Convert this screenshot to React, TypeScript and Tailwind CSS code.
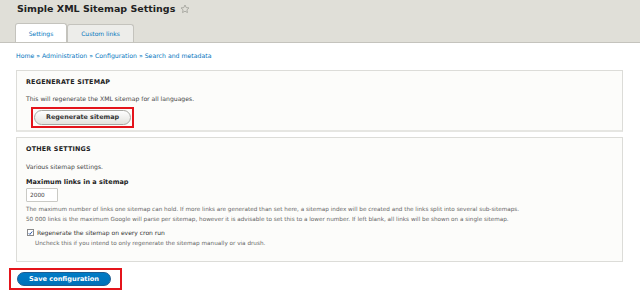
import React from "react";

// Simple XML Sitemap settings page (Drupal Seven admin look)
export default function App() {
  const font = { fontFamily: '"DejaVu Sans", Verdana, sans-serif' };

  return (
    <div className="w-[640px] h-[294px] bg-white overflow-hidden text-[#333]" style={font}>
      {/* Header with title and tabs */}
      <div className="h-[43px] bg-[#e0dfd8] border-b border-[#c4c3bd] px-[15px] flex flex-col justify-between">
        <div className="flex items-center gap-[5px] pl-[2px] pt-[1px] h-[16px]">
          <h1 className="text-[9.5px] font-bold text-[#222] leading-none">Simple XML Sitemap Settings</h1>
          <svg width="10" height="10" viewBox="0 0 24 24" fill="none" stroke="#9a9a94" strokeWidth="1.8" strokeLinejoin="round">
            <path d="M12 2.5l2.9 6.1 6.6.8-4.9 4.6 1.3 6.6L12 17.3l-5.9 3.3 1.3-6.6-4.9-4.6 6.6-.8z" />
          </svg>
        </div>
        <div className="flex items-end">
          <div className="w-[52px] h-[19px] bg-white rounded-t-[3px] border border-b-0 border-[#c4c3bd] flex items-center justify-center text-[6px] text-[#0074bd]">
            Settings
          </div>
          <div className="w-[67px] h-[18px] bg-[#ededea] rounded-t-[3px] border border-b-0 border-[#c4c3bd] flex items-center justify-center text-[6px] text-[#0074bd]">
            Custom links
          </div>
        </div>
      </div>

      <div className="px-[16px] pr-[17px]">
        {/* Breadcrumb */}
        <div className="h-[27px] flex items-center text-[6.2px] text-[#0074bd] pb-[1px]">
          Home » Administration » Configuration » Search and metadata
        </div>

        {/* Regenerate fieldset */}
        <div className="h-[62px] bg-[#fcfcfa] border border-[#dcdcd8] border-b-2 border-b-[#e6e6e2] px-[9px]">
          <div className="mt-[8px] text-[6.4px] font-bold tracking-[0.2px] text-[#222] leading-[7px]">REGENERATE SITEMAP</div>
          <div className="mt-[9px] text-[6.1px] text-[#444] leading-[7px]">This will regenerate the XML sitemap for all languages.</div>
          <div className="mt-[2px] ml-[5px] inline-flex border-2 border-[#e4141b] p-[1px]">
            <button className="w-[97px] h-[15px] rounded-full border border-[#a8a8a3] bg-gradient-to-b from-[#fefefe] to-[#e3e3de] text-[6.4px] font-bold text-[#333] leading-none">
              Regenerate sitemap
            </button>
          </div>
        </div>

        {/* Other settings fieldset */}
        <div className="mt-[5px] h-[125px] bg-[#fcfcfa] border border-[#dcdcd8] px-[9px]">
          <div className="mt-[8px] text-[6.4px] font-bold tracking-[0.2px] text-[#222] leading-[7px]">OTHER SETTINGS</div>
          <div className="mt-[10px] text-[6.1px] text-[#444] leading-[7px]">Various sitemap settings.</div>
          <div className="mt-[9px] text-[6.5px] font-bold text-[#222] leading-[7px]">Maximum links in a sitemap</div>
          <div className="mt-[2px] w-[32px] h-[14px] bg-white border border-[#cacac5] rounded-[1px] flex items-center pl-[3px] text-[5.8px] text-[#444]">
            2000
          </div>
          <div className="mt-[2px] text-[5.7px] text-[#666] leading-[10px] whitespace-nowrap">
            <div>
              The maximum number of links one sitemap can hold. If more links are generated than set here, a sitemap index will be created and the links split into several sub-sitemaps.
            </div>
            <div>
              50 000 links is the maximum Google will parse per sitemap, however it is advisable to set this to a lower number. If left blank, all links will be shown on a single sitemap.
            </div>
          </div>
          <div className="mt-[5px] flex items-center gap-[3px] ml-[1px] text-[6px] text-[#333] leading-[7px]">
            <span className="w-[7px] h-[7px] border border-[#8a8a8a] bg-white flex items-center justify-center">
              <svg width="6" height="6" viewBox="0 0 10 10" fill="none" stroke="#2a55a0" strokeWidth="2">
                <path d="M1.5 5.5l2.3 2.3L8.5 2" />
              </svg>
            </span>
            Regenerate the sitemap on every cron run
          </div>
          <div className="mt-[4px] ml-[9px] text-[5.7px] text-[#666] leading-[7px]">
            Uncheck this if you intend to only regenerate the sitemap manually or via drush.
          </div>
        </div>
      </div>

      {/* Save button */}
      <div className="pl-[9px] mt-[2px]">
        <div className="inline-flex w-[113px] h-[22px] border-2 border-[#e4141b] pl-[6px] pt-[2px]">
          <button className="w-[94px] h-[14px] rounded-full border border-[#1e5c90] bg-gradient-to-b from-[#007bc6] to-[#0071b8] text-white text-[6.6px] font-bold leading-none">
            Save configuration
          </button>
        </div>
      </div>
    </div>
  );
}
